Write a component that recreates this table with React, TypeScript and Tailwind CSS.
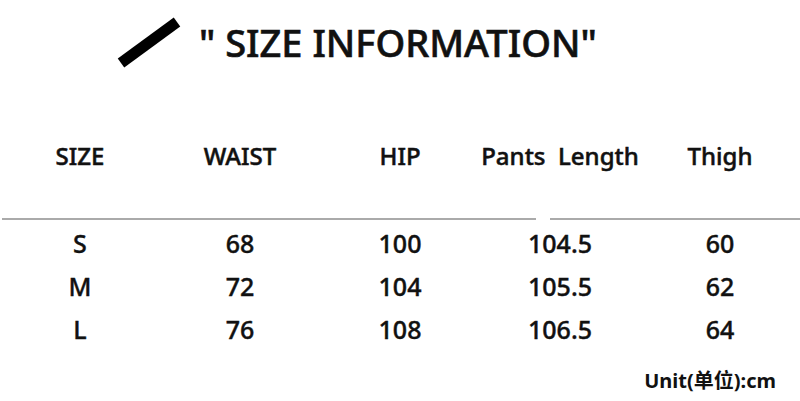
import React from "react";

const headers = ["SIZE", "WAIST", "HIP", "Pants  Length", "Thigh"];
const rows = [
  ["S", "68", "100", "104.5", "60"],
  ["M", "72", "104", "105.5", "62"],
  ["L", "76", "108", "106.5", "64"],
];

export default function App() {
  return (
    <div
      className="w-[800px] h-[401px] bg-white text-[#111] overflow-hidden"
      style={{ fontFamily: '"Noto Sans", "Noto Sans CJK SC", sans-serif' }}
    >
      <div className="h-[84px] flex items-center pl-[114px]">
        <svg width="70" height="58" viewBox="0 0 70 58" className="shrink-0">
          <line x1="7" y1="50" x2="63" y2="9" stroke="#000" strokeWidth="11" />
        </svg>
        <div className="ml-[15px] text-[38px] leading-[40px] font-medium [-webkit-text-stroke:0.6px_#111] whitespace-pre">
          {'" SIZE INFORMATION"'}
        </div>
      </div>
      <div className="mt-[48px] grid grid-cols-5 h-[48px] items-center text-[24px] leading-none font-medium [-webkit-text-stroke:0.5px_#111]">
        {headers.map((h) => (
          <div key={h} className="text-center whitespace-pre">
            {h}
          </div>
        ))}
      </div>
      <div className="mt-[38px] flex h-[2px]">
        <div className="ml-[2px] w-[534px] bg-[#aaaaaa]" />
        <div className="ml-[14px] flex-1 bg-[#aaaaaa]" />
      </div>
      <div className="mt-[2px]">
        {rows.map((r) => (
          <div key={r[0]} className="grid grid-cols-5 h-[43px] items-center text-[25px] leading-none font-medium [-webkit-text-stroke:0.4px_#111]">
            {r.map((c, i) => (
              <div key={i} className="text-center">
                {c}
              </div>
            ))}
          </div>
        ))}
      </div>
      <div className="mt-[20px] h-[20px] flex items-center justify-end pr-[24px] text-[20px] font-bold leading-none">
        Unit(单位):cm
      </div>
    </div>
  );
}
